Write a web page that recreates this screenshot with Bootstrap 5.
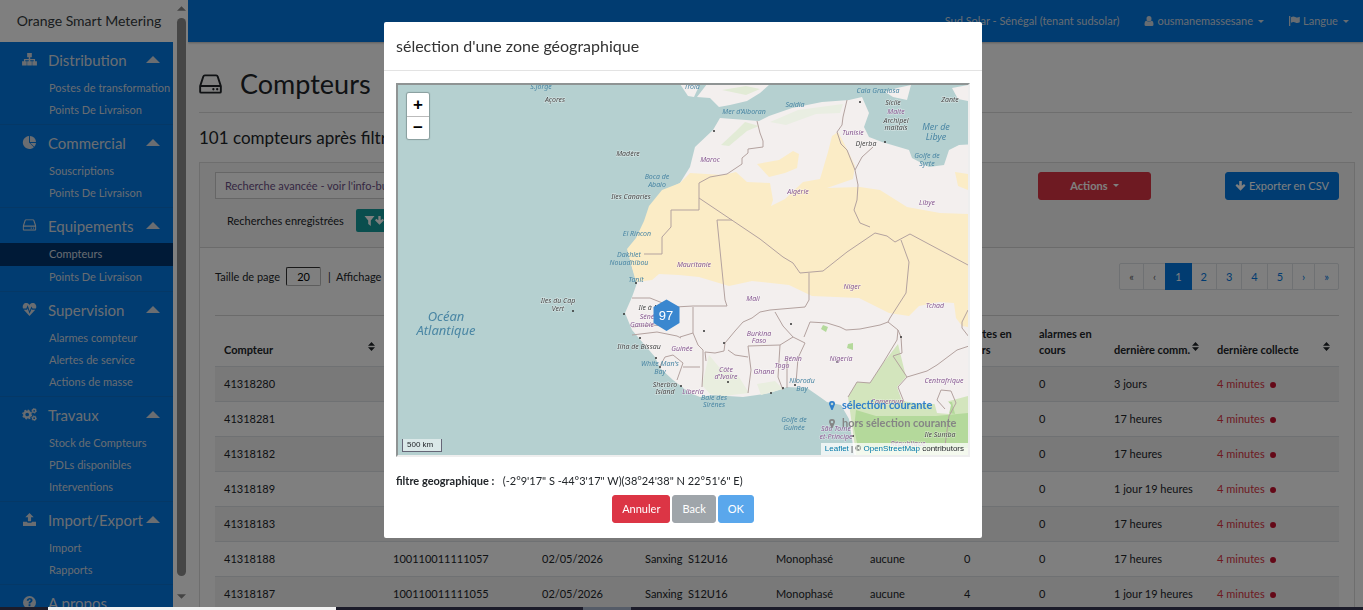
<!DOCTYPE html>
<html lang="fr">
<head>
<meta charset="utf-8">
<meta name="viewport" content="width=device-width, initial-scale=1">
<title>Orange Smart Metering</title>
<link href="https://cdn.jsdelivr.net/npm/bootstrap@5.3.0/dist/css/bootstrap.min.css" rel="stylesheet">
<style>
  :root { --brand: #0279e2; --bs-link-color: #0279e2; }
  html { font-size: 12px; }
  body { font-family: Lato, "Liberation Sans", sans-serif; font-size: 11px; line-height: 18px; color: #212529; overflow: hidden; }
  svg { display: block; fill: currentColor; }
  .app { height: 100vh; }
  .side { width: 173px; }
  .side-brand { height: 42px; font-size: 14px; color: #343a40; text-decoration: none; padding-left: 5px; }
  .side-menu { background: var(--brand); }
  .group { padding: 0 0 3px; border-bottom: 1px solid #0a70cc; }
  .group-head { height: 35px; padding-left: 22px; color: #d5dbe2; background: none; border: 0; font-size: 15px; }
  .group-head svg { width: 15px; height: 13px; }
  .group-head span { width: 98px; margin-left: 11px; }
  .group-head .up { width: 14px; height: 7px; }
  .sub { height: 22px; line-height: 22px; padding-left: 49px; color: #d0d8e2; text-decoration: none; white-space: nowrap; }
  .sub.active { background: #00356e; height: 23px; }
  .rail { width: 15px; padding: 6px 2px 11px 3px; color: #888; }
  .rail i { width: 9px; border-radius: 5px; background: #8c8c8c; margin: 7px 0 18px; }
  .topbar { height: 42px; background: var(--brand); padding-right: 14px; gap: 25px; box-shadow: 0 1px 2px #bbb; }
  .topbar .nav-link { color: #cfd8e2; padding: 0; }
  .topbar .dropdown-toggle::after, .btn.dropdown-toggle::after { border-width: 3px 3px 0; vertical-align: 3px; margin-left: 5px; }
  .page { padding: 0 8px 0 11px; }
  .page-title { height: 71px; border-bottom: 1px solid #dcdcdc; margin-right: 3px; font-size: 27px; gap: 18px; padding-top: 14px; }
  .page-count { font-size: 17px; line-height: 24px; margin: 13px 0 12px; font-weight: 400; }
  .panel { border: 1px solid #dcdcdc; border-radius: 0; }
  .panel-top { background: #f7f7f7; border-bottom: 1px solid #d6d6d6; padding: 9px 15px 15px; }
  .saved { margin: 9px 0 0 12px; gap: 12px; }
  .tools { width: 301px; }
  .search { width: 560px; height: 27px; border-radius: 0; font-size: 11px; padding: 0 9px; border: 1px solid #ccc; }
  .search::placeholder { color: #6b4f86; opacity: 1; }
  .btn { font-size: 11px; height: 28px; padding: 0 9px; line-height: 26px; border-radius: 3px; }
  .btn-menu { width: 113px; }
  .btn-primary { --bs-btn-bg: #0279e2; --bs-btn-border-color: #0279e2; --bs-btn-disabled-bg: #0279e2; --bs-btn-disabled-border-color: #0279e2; }
  .btn-teal { background: #149c9c; color: #fff; height: 23px; padding: 0 7px; border-radius: 2px; }
  .list-bar { padding: 15px 0 25px; }
  .page-size { width: 35px; height: 19px; border: 1px solid #767676; border-color: #333 #bbb #bbb #333; border-radius: 2px; text-align: center; font-size: 11px; margin: 0 7px 0 6px; padding: 0; }
  .pagination { --bs-pagination-border-color: #dee2e6; --bs-pagination-active-bg: #0279e2; --bs-pagination-active-border-color: #0279e2; --bs-pagination-padding-x: 9px; --bs-pagination-padding-y: 0; --bs-pagination-font-size: 11px; --bs-pagination-border-radius: 2px; --bs-pagination-disabled-bg: #fff; }
  .page-link { line-height: 25px; }
  .meters { table-layout: fixed; width: 100%; margin: 0; }
  .meters td { height: 35px; padding: 0 9px; vertical-align: middle; border-top: 1px solid #dee2e6; border-bottom: 0; white-space: nowrap; }
  .meters th { height: 51px; padding: 8px 9px; line-height: 16px; font-size: 11px; vertical-align: bottom; border-top: 1px solid #d6d6d6; border-bottom: 0; }
  .meters tbody tr:nth-child(odd) td { background: #f2f2f2; }
  .c-a { width: 169px; } .c-b { width: 149px; } .c-c { width: 103px; } .c-d { width: 131px; } .c-e { width: 94px; } .c-f { width: 75px; }
  .late { color: #dc3545; }
  .late i { display: inline-block; width: 6px; height: 6px; border-radius: 50%; background: #c8102e; margin-left: 3px; }
  .modal { padding-left: 3px; }
  .modal-dialog { max-width: 598px; margin: 22px auto; }
  .modal-content { border: 0; border-radius: 2px; }
  .modal-header { padding: 12px; height: 49px; border-color: #e3e3e3; }
  .modal-title { font-size: 16px; line-height: 24px; font-weight: 400; color: #333; }
  .modal-body { padding: 12px 12px 15px; }
  .map { height: 374px; border: 2px solid; border-color: #8f9494 #eee #eee #8f9494; background: #b5d0d0; }
  .map > svg { width: 100%; height: 100%; }
  .map text { font-family: "Noto Sans", sans-serif; font-style: italic; font-size: 7px; text-anchor: middle; stroke: #fff; stroke-opacity: .5; stroke-width: 1px; paint-order: stroke; }
  .map .sea { fill: #4a86a4; stroke: none; }
  .map .ocean { font-size: 13px; }
  .map .gulf { font-size: 9px; }
  .map .land { fill: #85568f; }
  .map .isle { fill: #444; }
  .map .count { font: 13px "Liberation Sans", sans-serif; fill: #fff; stroke: none; }
  .zoomer { top: 8px; left: 9px; border-radius: 2px; overflow: hidden; box-shadow: 0 0 1px 1px rgba(0,0,0,.25); }
  .zoomer button { width: 22px; height: 23px; border: 0; background: #fff; font: bold 17px/22px "Liberation Sans", sans-serif; padding: 0; }
  .zoomer button + button { border-top: 1px solid #bbb; }
  .scale { left: 4px; bottom: 3px; width: 40px; font: 8px/12px "Liberation Sans", sans-serif; padding: 0 4px; border: 1px solid #667; border-top: 0; background: rgba(255,255,255,.5); white-space: nowrap; }
  .credit { right: 0; bottom: 0; font: 8px/12px "Liberation Sans", sans-serif; background: rgba(255,255,255,.75); padding: 0 4px; white-space: nowrap; }
  .credit a { color: #0078a8; text-decoration: none; }
  .legend { right: 0; bottom: 23px; width: 139px; font-size: 11px; font-weight: 700; line-height: 18px; color: #2f7fca; }
  .legend svg { width: 6px; height: 9px; margin-right: 7px; }
  .legend .out { color: #858585; }
  .filter { margin: 14px 0 4px; line-height: 20px; }
  .modal-actions { gap: 2px; }
  .strip { height: 3px; z-index: 1070; background: #1c1c2a; padding-left: 48px; }
  .strip i:first-child { width: 288px; background: #f2f2f2; margin-right: 247px; }
  .strip i:last-child { width: 48px; background: #555c68; }
</style>
</head>
<body>
<svg width="0" height="0" class="position-absolute" aria-hidden="true">
  <symbol id="i-up" viewBox="0 0 14 7"><path d="M7 0l7 7H0z"/></symbol>
  <symbol id="i-tree" viewBox="0 0 16 14"><path d="M5.500 0h5v4.500H8.800V6.500H14V9h2v4.500h-5V9h1.600V7.800H8.800V9h1.700v4.500h-5V9h1.700V7.800H3.400V9H5v4.500H0V9h2V6.500h5.200v-2H5.500z"/></symbol>
  <symbol id="i-pie" viewBox="0 0 16 14"><path d="M7.500 0v7l5.200 5A7 7 0 1 1 7.500 0zM8.500 0A6.500 6.500 0 0 1 15 6.500H8.500zM8.800 7.500H15a6.500 6.500 0 0 1-1.800 4z"/></symbol>
  <symbol id="i-hdd" viewBox="0 0 24 20"><path fill="none" stroke="currentColor" stroke-width="2" d="M1.200 12.200L4.500 2.200Q4.900 1 6 1h12q1.100 0 1.500 1.200l3.300 10V18q0 1-1 1H2.200q-1 0-1-1zM1.200 12h21.600"/><circle cx="15" cy="15.500" r="1.200"/><circle cx="19" cy="15.500" r="1.200"/></symbol>
  <symbol id="i-heart" viewBox="0 0 16 14"><path d="M8 2.200C9.500-.5 13-.4 14.500 1.500c1 1.300 1 3 .4 4.500h-3.600L10 3.800 8.200 8.500 6 2.500 4.600 6H1.100C.5 4.500.5 2.800 1.500 1.500 3-.4 6.500-.5 8 2.200zM1.800 7.200h3.600l.6-1.500 2.100 5.800 2.200-5.300.5 1h3.400L8 14z"/></symbol>
  <symbol id="i-cogs" viewBox="0 0 16 14"><g fill="none" stroke="currentColor"><circle cx="5.500" cy="7" r="3.200" stroke-width="2.400"/><circle cx="5.500" cy="7" r="4.700" stroke-width="1.400" stroke-dasharray="1.900 1.800"/><circle cx="13" cy="3" r="1.700" stroke-width="1.500"/><circle cx="13" cy="3" r="2.600" stroke-width=".8" stroke-dasharray="1.300 1.400"/><circle cx="13" cy="11" r="1.700" stroke-width="1.500"/><circle cx="13" cy="11" r="2.600" stroke-width=".8" stroke-dasharray="1.300 1.400"/></g></symbol>
  <symbol id="i-upload" viewBox="0 0 16 14"><path d="M8 0l4.500 4.700H9.700V9H6.300V4.700H3.500zM1 9.500h4.200q.3 1 1.300 1h3q1 0 1.300-1H15V14H1z"/></symbol>
  <symbol id="i-help" viewBox="0 0 16 14"><path fill-rule="evenodd" d="M8 0a7 7 0 1 1 0 14A7 7 0 0 1 8 0zM5 5h2q.2-1.200 1.200-1.200c1.500 0 1.200 1.400.2 1.900Q7 6.400 7 8h2c0-1 2.300-1.200 2.300-3.300C11.300 1.200 5.400 1.200 5 5zm2 4v2h2V9z"/></symbol>
  <symbol id="i-user" viewBox="0 0 10 10"><path d="M5 0a2.500 2.700 0 1 1 0 5.400A2.500 2.700 0 0 1 5 0zM2.500 4.800Q5 7 7.500 4.800 9.500 5 9.500 8.500 9.500 10 8 10H2Q.5 10 .5 8.500.5 5 2.500 4.800z"/></symbol>
  <symbol id="i-flag" viewBox="0 0 11 10"><path d="M0 0h1.300v10H0zM2 1.200q2.300-1.300 4.300-.2T10.800.8v5.400q-2.500 1.300-4.500.2T2 6.800z"/></symbol>
  <symbol id="i-down" viewBox="0 0 10 10"><path d="M3.700 0h2.600v4.800L8.500 3 10 4.600 5 9.700 0 4.600 1.500 3l2.200 1.800z"/></symbol>
  <symbol id="i-filter" viewBox="0 0 10 10"><path d="M0 0h10L6.300 4.500V10L3.700 8V4.500z"/></symbol>
  <symbol id="i-sort" viewBox="0 0 7 9"><path d="M3.500 0L7 3.700H0zM0 5.300h7L3.500 9z"/></symbol>
  <symbol id="i-pin" viewBox="0 0 6 9"><path fill-rule="evenodd" d="M3 0a3 3 0 0 1 3 3.200L3.600 9H2.400L0 3.200A3 3 0 0 1 3 0zm0 1.700a1.300 1.300 0 1 0 0 2.600 1.300 1.300 0 0 0 0-2.600z"/></symbol>
</svg>

<div class="app d-flex">
  <nav class="side d-flex flex-column flex-shrink-0 overflow-hidden" aria-label="Menu principal">
    <a class="side-brand d-flex align-items-center justify-content-center flex-shrink-0" href="#">Orange Smart Metering</a>
    <div class="side-menu flex-grow-1">
      <div class="group">
        <button class="group-head d-flex align-items-center w-100 text-start"><svg><use href="#i-tree"/></svg><span>Distribution</span><svg class="up"><use href="#i-up"/></svg></button>
        <a class="sub d-block" href="#">Postes de transformation</a>
        <a class="sub d-block" href="#">Points De Livraison</a>
      </div>
      <div class="group">
        <button class="group-head d-flex align-items-center w-100 text-start"><svg><use href="#i-pie"/></svg><span>Commercial</span><svg class="up"><use href="#i-up"/></svg></button>
        <a class="sub d-block" href="#">Souscriptions</a>
        <a class="sub d-block" href="#">Points De Livraison</a>
      </div>
      <div class="group">
        <button class="group-head d-flex align-items-center w-100 text-start"><svg viewBox="-1 0 26 22"><use href="#i-hdd" width="24" height="20"/></svg><span>Equipements</span><svg class="up"><use href="#i-up"/></svg></button>
        <a class="sub d-block active" href="#">Compteurs</a>
        <a class="sub d-block" href="#">Points De Livraison</a>
      </div>
      <div class="group">
        <button class="group-head d-flex align-items-center w-100 text-start"><svg><use href="#i-heart"/></svg><span>Supervision</span><svg class="up"><use href="#i-up"/></svg></button>
        <a class="sub d-block" href="#">Alarmes compteur</a>
        <a class="sub d-block" href="#">Alertes de service</a>
        <a class="sub d-block" href="#">Actions de masse</a>
      </div>
      <div class="group">
        <button class="group-head d-flex align-items-center w-100 text-start"><svg><use href="#i-cogs"/></svg><span>Travaux</span><svg class="up"><use href="#i-up"/></svg></button>
        <a class="sub d-block" href="#">Stock de Compteurs</a>
        <a class="sub d-block" href="#">PDLs disponibles</a>
        <a class="sub d-block" href="#">Interventions</a>
      </div>
      <div class="group">
        <button class="group-head d-flex align-items-center w-100 text-start"><svg><use href="#i-upload"/></svg><span>Import/Export</span><svg class="up"><use href="#i-up"/></svg></button>
        <a class="sub d-block" href="#">Import</a>
        <a class="sub d-block" href="#">Rapports</a>
      </div>
      <button class="group-head d-flex align-items-center w-100 text-start"><svg><use href="#i-help"/></svg><span>A propos</span></button>
    </div>
  </nav>
  <div class="rail d-flex flex-column align-items-center flex-shrink-0" aria-hidden="true">
    <svg width="9" height="5"><use href="#i-up"/></svg>
    <i class="flex-grow-1"></i>
    <svg width="9" height="5" viewBox="0 0 14 7"><path d="M0 0h14L7 7z"/></svg>
  </div>

  <div class="flex-grow-1 overflow-hidden">
    <header class="topbar d-flex align-items-center justify-content-end">
      <a class="nav-link" href="#">Sud Solar - Sénégal (tenant sudsolar)</a>
      <a class="nav-link dropdown-toggle d-flex align-items-center" href="#" role="button"><svg class="me-1" width="10" height="10"><use href="#i-user"/></svg>ousmanemassesane</a>
      <a class="nav-link dropdown-toggle d-flex align-items-center" href="#" role="button"><svg class="me-1" width="11" height="10"><use href="#i-flag"/></svg>Langue</a>
    </header>
    <main class="page">
      <h1 class="page-title d-flex align-items-center fw-normal mb-0"><svg width="23" height="20"><use href="#i-hdd"/></svg>Compteurs</h1>
      <h2 class="page-count">101 compteurs après filtrage</h2>
      <section class="card panel">
        <div class="panel-top">
          <div class="d-flex justify-content-between">
            <input class="form-control search" type="search" aria-label="Recherche avancée" placeholder="Recherche avancée - voir l'info-bulle">
            <div class="tools d-flex justify-content-between">
              <button class="btn btn-danger btn-menu fw-bold dropdown-toggle">Actions</button>
              <button class="btn btn-primary d-flex align-items-center"><svg class="me-1" width="11" height="10"><use href="#i-down"/></svg>Exporter en CSV</button>
            </div>
          </div>
          <div class="saved d-flex align-items-center">
            <span>Recherches enregistrées</span>
            <button class="btn btn-teal d-flex align-items-center" aria-label="Charger un filtre"><svg width="11" height="10"><use href="#i-filter"/></svg><svg width="9" height="9"><use href="#i-down"/></svg></button>
          </div>
        </div>
        <div class="px-3 mx-1">
          <div class="list-bar d-flex justify-content-between">
            <div class="d-flex align-items-center">
              <label for="size">Taille de page</label><input id="size" class="page-size" value="20"><span>|&nbsp; Affichage de 1 à 20</span>
            </div>
            <ul class="pagination mb-0">
              <li class="page-item disabled"><a class="page-link" href="#">«</a></li>
              <li class="page-item disabled"><a class="page-link" href="#">‹</a></li>
              <li class="page-item active"><a class="page-link" href="#">1</a></li>
              <li class="page-item"><a class="page-link" href="#">2</a></li>
              <li class="page-item"><a class="page-link" href="#">3</a></li>
              <li class="page-item"><a class="page-link" href="#">4</a></li>
              <li class="page-item"><a class="page-link" href="#">5</a></li>
              <li class="page-item"><a class="page-link" href="#">›</a></li>
              <li class="page-item"><a class="page-link" href="#">»</a></li>
            </ul>
          </div>
          <table class="meters">
            <colgroup><col class="c-a"><col class="c-b"><col class="c-c"><col class="c-d"><col class="c-e"><col class="c-e"><col class="c-f"><col class="c-f"><col class="c-c"><col class="c-d"></colgroup>
            <thead><tr>
              <th><div class="d-flex justify-content-between">Compteur<svg width="7" height="9"><use href="#i-sort"/></svg></div></th>
              <th></th><th></th><th></th><th></th><th></th>
              <th>alertes en cours</th><th>alarmes en cours</th>
              <th><div class="d-flex justify-content-between text-nowrap">dernière comm.<svg width="7" height="9"><use href="#i-sort"/></svg></div></th>
              <th><div class="d-flex justify-content-between">dernière collecte<svg width="7" height="9"><use href="#i-sort"/></svg></div></th>
            </tr></thead>
            <tbody>
              <tr><td>41318280</td><td></td><td></td><td></td><td></td><td></td><td></td><td>0</td><td>3 jours</td><td class="late">4 minutes <i></i></td></tr>
              <tr><td>41318281</td><td></td><td></td><td></td><td></td><td></td><td></td><td>0</td><td>17 heures</td><td class="late">4 minutes <i></i></td></tr>
              <tr><td>41318182</td><td></td><td></td><td></td><td></td><td></td><td></td><td>0</td><td>17 heures</td><td class="late">4 minutes <i></i></td></tr>
              <tr><td>41318189</td><td></td><td></td><td></td><td></td><td></td><td></td><td>0</td><td>1 jour 19 heures</td><td class="late">4 minutes <i></i></td></tr>
              <tr><td>41318183</td><td></td><td></td><td></td><td></td><td></td><td></td><td>0</td><td>17 heures</td><td class="late">4 minutes <i></i></td></tr>
              <tr><td>41318188</td><td>100110011111057</td><td>02/05/2026</td><td>Sanxing &nbsp;S12U16</td><td>Monophasé</td><td>aucune</td><td>0</td><td>0</td><td>17 heures</td><td class="late">4 minutes <i></i></td></tr>
              <tr><td>41318187</td><td>100110011111055</td><td>02/05/2026</td><td>Sanxing &nbsp;S12U16</td><td>Monophasé</td><td>aucune</td><td>4</td><td>0</td><td>1 jour 19 heures</td><td class="late">4 minutes <i></i></td></tr>
            </tbody>
          </table>
        </div>
      </section>
    </main>
  </div>
</div>

<div class="modal-backdrop show"></div>
<div class="modal show d-block" role="dialog" aria-labelledby="zone-title">
  <div class="modal-dialog">
    <div class="modal-content">
      <div class="modal-header"><h5 class="modal-title" id="zone-title">sélection d'une zone géographique</h5></div>
      <div class="modal-body">
        <div class="map position-relative overflow-hidden">
          <svg viewBox="398 85 570 370" preserveAspectRatio="xMidYMid slice" role="img" aria-label="Carte de l'Afrique de l'Ouest">
            <!-- land -->
            <g fill="#f3efee">
              <path d="M720 118l-7 12-18 17-5 20-10 16-17 9-13 16-5 15-8 17-9 10 4 17 5 16-5 14-7 16 7 17 11 13 12 14 5 11 13 12 17 13 10 4 13-2 30 2 27-4 17-6 20 1 13 9 7 5 14 3 8 14 6 40h120V144l-16 1-10 5-5 15-15 2-17-9-3-8-27-8-13-5-5-10 5-14-7-16-13 3-27 2-30 6-23 8-10 5z"/>
              <path d="M707 84l-10 13 13 1 9 9 11-2 17-4 13-8 10-9z"/>
              <path d="M885 92l12-4 14-3-4 15-14-3zM952 88l16-3v16l-10-2z"/>
              <path d="M680 84h20l-6 13-6-1z"/>
            </g>
            <!-- Sahara -->
            <g fill="#fbecc6">
              <path d="M680 183l10-10 33 2 13-3 11 10 23 1 3 17-2 6 14-7 18-17 17-3 8-27 4-16 6-4 9 17 8 17-2 13-26 9 33-1 20 3 27 17 33 6 28 1v113l-6-1-6-8-2-15-15-1-20 4-10 10-20-3-30-15-47-2-23-11-37-4-23 5-30-9-20-2-20-1-7 6-16 2-5-18-4-15 9-11 8-17 5-15 13-16z"/>
              <path d="M757 164l22-4 14-9 6 3-2 14-12 5-16 4z"/>
              <path d="M955 172l13 2v16l-10-4z"/>
            </g>
            <!-- woods -->
            <g fill="#d3e5bd">
              <path d="M848 397l9-15 13 1 14-21 14-18 8 33-9 10 5 14 20 3h16l30-8v59H856l-4-30z"/>
              <path d="M709 355l10 12 20 10 10 16-25 3-14-2-8-9zM757 384l18-3 8 8-22 6z" fill="#e9eedf"/>
              <path d="M735 132l10-10 14 4-12 5-18 15-8-1zM722 90l24 5 14-6-14-3z" fill="#e2ebd6"/>
              <path d="M770 122l28-12 45-6-3 9-24 1-30 11z" fill="#e9eee2"/>
            </g>
            <path fill="#b4d99b" d="M856 410l20 6h60l32-3v35H858l-4-20zM823 325l5 2-2 5-5-3zM848 344l5-1v7l-6-2zM938 402h14l3 12-14-2z"/>
            <path fill="#f3efee" d="M933 398l10-3 8 10-2 9-12-1zM903 380l30-8 35-14v36l-30 6-32-4z"/>
            <!-- frontiers -->
            <g fill="none" stroke="#b3a29f" stroke-width="1" stroke-linejoin="round">
              <path d="M757 121l3 12 3 8v6l-15 2v4l-6 5v6l-15 10-17 3-11 6v27h-28v17l-9 10v17h-18"/>
              <path d="M699 198l61 41 23 18 10 6 7 10 23-2 24-19 28-19 12 3 8 6 15-8 58 31"/>
              <path d="M732 220h-15l3 30 5 50 2 6h-34l-18 1-10-3-15-6h-18"/>
              <path d="M847 100l-4 17-1 8-5 7 4 12 6 6 8 20 3 15-1 15-3 10 6 13 10 4M855 170l7-13 11-10"/>
              <path d="M809 273v27l-4 7-35 3-10 2-8 6-9 4-8 9-10 12-1 8-9 2-10-1 1 9"/>
              <path d="M901 240l8 22-3 31-16 25-2 4-8 3-20 4-14 1-6-3-13-4-17-1-6 15"/>
              <path d="M888 322l10 8-1 10-14 23-13 20-13-1-9 15M898 330l3 7 1 16-9 3 14 21 20-6 10-6 20-15 12-4M907 377l-9 10 6 15"/>
              <path d="M968 310l-6 12v6l7 9M748 346l32-1 13-8 12 6-7 15-2 25M748 346l3 24-3 23M728 350l7 5 13 2M780 345l-2 32 5 13M787 360v28M775 312l8 14 10 11"/>
              <path d="M680 337l13-4 5 12 5 5v20l-1 17M632 335l25-3 20 4 4 2M660 366l5-9 8-2 10 8-6 17M683 367h17M632 327l20-2 12 1M693 333v-26M945 409l-8-9 4-10 10 1 5 12-7 13-4 30"/>
            </g>
            <g fill="#333">
              <circle cx="573" cy="311" r="1"/><circle cx="624" cy="314" r="1"/><circle cx="640" cy="338" r="1"/><circle cx="656" cy="358" r="1"/><circle cx="660" cy="367" r="1"/><circle cx="681" cy="386" r="1"/><circle cx="704" cy="331" r="1"/><circle cx="724" cy="343" r="1"/><circle cx="728" cy="382" r="1"/><circle cx="771" cy="393" r="1"/><circle cx="783" cy="388" r="1"/><circle cx="795" cy="385" r="1"/><circle cx="791" cy="324" r="1"/><circle cx="837" cy="362" r="1"/><circle cx="901" cy="337" r="1"/><circle cx="714" cy="131" r="1"/><circle cx="860" cy="102" r="1"/><circle cx="885" cy="142" r="1"/><circle cx="853" cy="436" r="1"/><circle cx="636" cy="283" r="1"/>
            </g>
            <!-- water names -->
            <g>
              <text class="sea ocean" x="446" y="321">Océan</text><text class="sea ocean" x="446" y="335">Atlantique</text>
              <text class="sea" x="541" y="89">S.Jorge</text><text class="sea" x="692" y="89">Troia</text>
              <text class="sea" x="657" y="179">Boca de</text><text class="sea" x="657" y="187">Abaio</text>
              <text class="sea" x="637" y="236">El Rincon</text><text class="sea" x="629" y="257">Dakhlet</text><text class="sea" x="629" y="265">Nouadhibou</text><text class="sea" x="636" y="282">Tanit</text>
              <text class="sea" x="660" y="366">White Man's</text><text class="sea" x="660" y="374">Bay</text>
              <text class="sea" x="714" y="400">Baie des</text><text class="sea" x="714" y="407">Sirènes</text>
              <text class="sea" x="794" y="422">Golfe de</text><text class="sea" x="794" y="430">Guinée</text>
              <text class="sea" x="802" y="383">Niorodu</text><text class="sea" x="802" y="391">Bay</text>
              <text class="sea" x="744" y="114">Mer d'Alboran</text><text class="sea" x="795" y="107">Saidia</text><text class="sea" x="878" y="93">Cala Graziosa</text>
              <text class="sea gulf" x="936" y="130">Mer de</text><text class="sea gulf" x="936" y="140">Libye</text>
              <text class="sea" x="927" y="158">Golfe de</text><text class="sea" x="927" y="166">Syrte</text>
            </g>
            <!-- countries and islands -->
            <g>
              <text class="land" x="710" y="162">Maroc</text><text class="land" x="798" y="194">Algérie</text><text class="land" x="853" y="135">Tunisie</text><text class="land" x="927" y="205">Libye</text>
              <text class="land" x="694" y="267">Mauritanie</text><text class="land" x="753" y="301">Mali</text><text class="land" x="852" y="289">Niger</text><text class="land" x="935" y="308">Tchad</text>
              <text class="land" x="759" y="336">Burkina</text><text class="land" x="759" y="343">Faso</text><text class="land" x="841" y="361">Nigeria</text><text class="land" x="944" y="383">Centrafrique</text>
              <text class="land" x="726" y="372">Côte</text><text class="land" x="726" y="379">d'Ivoire</text><text class="land" x="764" y="374">Ghana</text><text class="land" x="793" y="361">Bénin</text><text class="land" x="782" y="368">Togo</text>
              <text class="land" x="682" y="351">Guinée</text><text class="land" x="693" y="394">Liberia</text><text class="land" x="652" y="319">Sénégal</text><text class="land" x="642" y="327">Gambie</text><text class="land" x="896" y="114">Malte</text>
              <text class="land" x="836" y="431">São Tomé</text><text class="land" x="836" y="439">et-Principe</text><text class="land" x="908" y="446">République</text><text class="land" x="887" y="404">Cameroun</text>
              <text class="isle" x="555" y="102">Açores</text><text class="isle" x="628" y="156">Madère</text><text class="isle" x="631" y="199">Iles Canaries</text>
              <text class="isle" x="558" y="303">Iles du Cap</text><text class="isle" x="558" y="311">Vert</text><text class="isle" x="649" y="310">Ile à M</text>
              <text class="isle" x="639" y="349">Ilha de Bissau</text><text class="isle" x="665" y="387">Sherbro</text><text class="isle" x="665" y="394">Island</text>
              <text class="isle" x="893" y="105">Sicile</text><text class="isle" x="896" y="123">Archipel</text><text class="isle" x="896" y="130">maltais</text><text class="isle" x="866" y="146">Djerba</text><text class="isle" x="950" y="102">Zante</text><text class="isle" x="940" y="437">Ile Sumba</text>
            </g>
            <path fill="#3a87cf" d="M666.500 299.500l13 7.500v16l-13 8-13-8v-16z"/>
            <text class="count" x="666" y="320">97</text>
          </svg>
          <div class="zoomer position-absolute d-flex flex-column"><button aria-label="Zoom avant">+</button><button aria-label="Zoom arrière">−</button></div>
          <div class="scale position-absolute">500 km</div>
          <div class="legend position-absolute">
            <div class="d-flex align-items-center"><svg><use href="#i-pin"/></svg>sélection courante</div>
            <div class="d-flex align-items-center out"><svg><use href="#i-pin"/></svg>hors sélection courante</div>
          </div>
          <div class="credit position-absolute"><a href="#">Leaflet</a> | © <a href="#">OpenStreetMap</a> contributors</div>
        </div>
        <p class="filter"><b>filtre geographique :</b> &nbsp; (-2°9'17" S -44°3'17" W)(38°24'38" N 22°51'6" E)</p>
        <div class="d-flex justify-content-center modal-actions">
          <button class="btn btn-danger">Annuler</button>
          <button class="btn btn-secondary" disabled>Back</button>
          <button class="btn btn-primary" disabled>OK</button>
        </div>
      </div>
    </div>
  </div>
</div>
<div class="strip fixed-bottom d-flex" aria-hidden="true"><i></i><i></i></div>
<script src="https://cdn.jsdelivr.net/npm/bootstrap@5.3.0/dist/js/bootstrap.bundle.min.js"></script>
</body>
</html>
